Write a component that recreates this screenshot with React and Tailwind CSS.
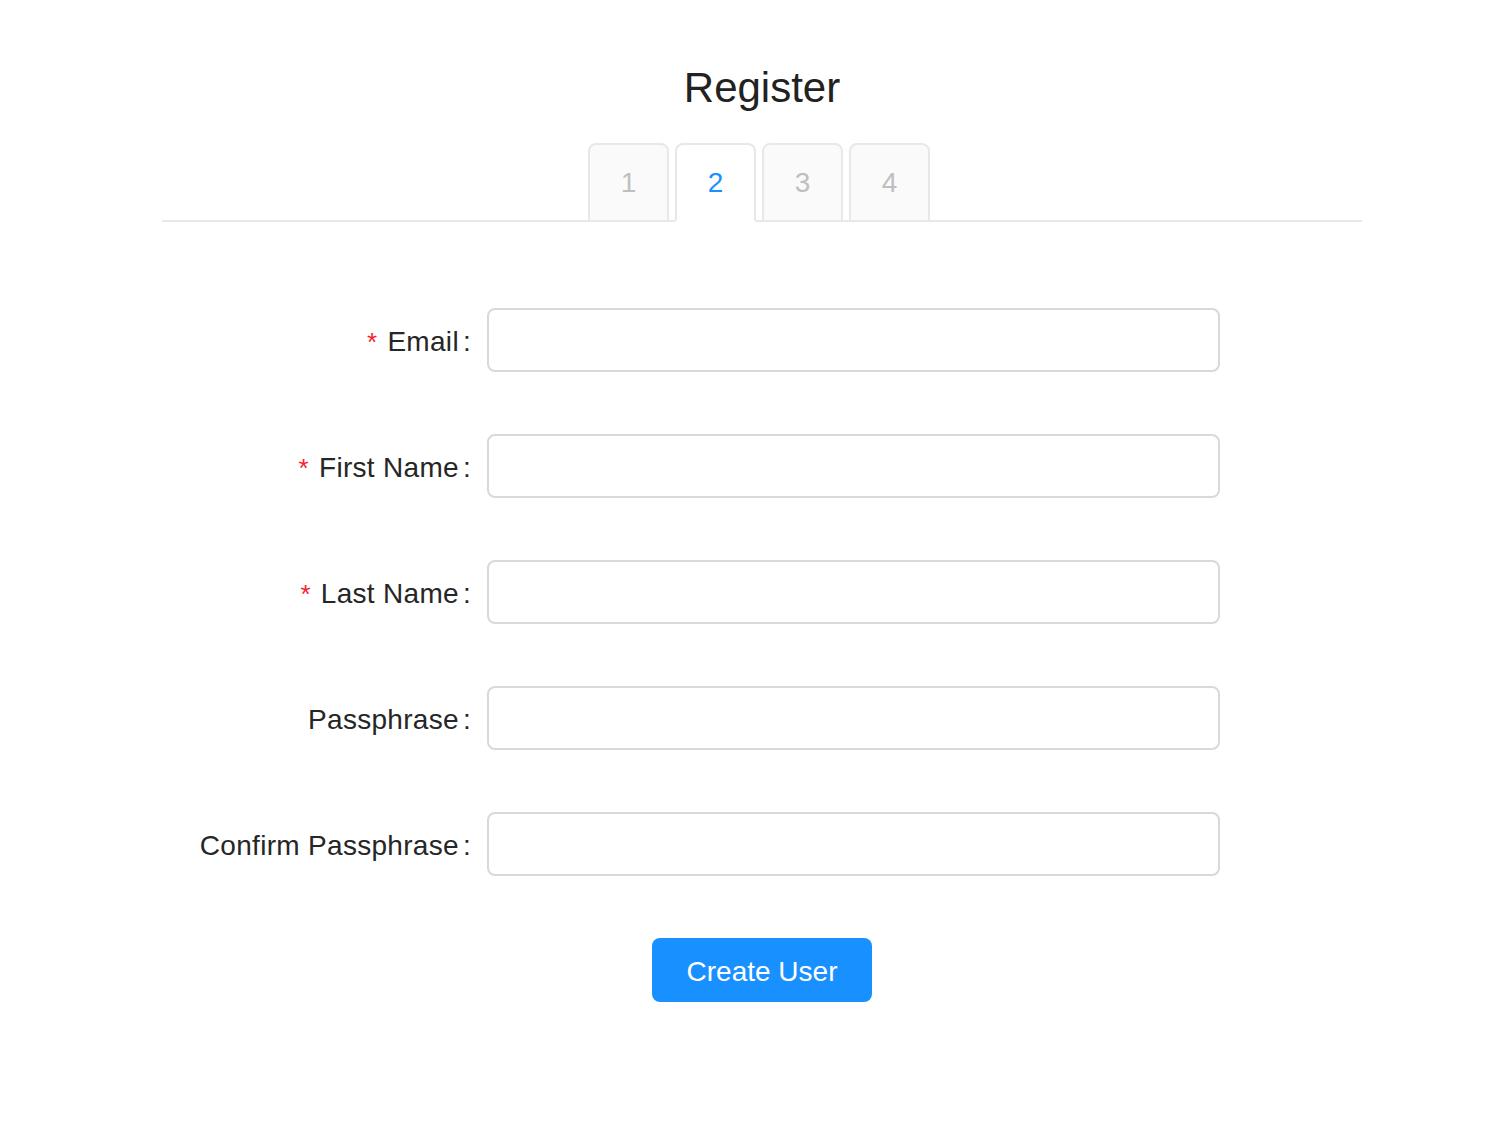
const FIELDS = [
  { label: "Email", required: true },
  { label: "First Name", required: true },
  { label: "Last Name", required: true },
  { label: "Passphrase", required: false, type: "password" },
  { label: "Confirm Passphrase", required: false, type: "password" },
];

const STEPS = ["1", "2", "3", "4"];

export default function App() {
  const active = "2";

  return (
    <div className="min-h-[1126px] bg-white font-['Liberation_Sans',Arial,sans-serif] text-[#262626]">
      <div className="ml-[162px] w-[1200px] pt-[62px]">
        <h1 className="text-center text-[42px] leading-[52px] text-[#222]">
          Register
        </h1>

        <div className="mt-[29px] flex justify-center gap-[6px] border-b-2 border-[#e8e8e8] pr-[6px]">
          {STEPS.map((step) => (
            <div
              key={step}
              className={`-mb-[2px] flex h-[79px] w-[81px] items-center justify-center rounded-t-[8px] border-2 text-[28px] ${
                step === active
                  ? "border-[#e8e8e8] border-b-white bg-white text-[#1890ff]"
                  : "border-[#e8e8e8] bg-[#fafafa] text-[#bfbfbf]"
              }`}
            >
              {step}
            </div>
          ))}
        </div>

        <form className="mt-[86px] flex flex-col gap-[62px]">
          {FIELDS.map((field) => (
            <div key={field.label} className="flex items-center">
              <label className="flex w-[325px] items-center justify-end pr-[16px] pt-[4px] text-[28px] leading-[40px] tracking-[0.3px] text-[#262626]">
                {field.required && (
                  <span className="mr-[10px] text-[26px] text-[#f5222d]">*</span>
                )}
                {field.label}
                <span className="ml-[4px]">:</span>
              </label>
              <input
                type={field.type || "text"}
                className="h-[64px] w-[733px] rounded-[8px] border-2 border-[#d9d9d9] bg-white px-[22px] text-[28px] outline-none"
              />
            </div>
          ))}

          <div className="flex justify-center">
            <button
              type="button"
              className="h-[64px] w-[220px] rounded-[8px] bg-[#1890ff] pt-[3px] text-[28px] text-white"
            >
              Create User
            </button>
          </div>
        </form>
      </div>
    </div>
  );
}
